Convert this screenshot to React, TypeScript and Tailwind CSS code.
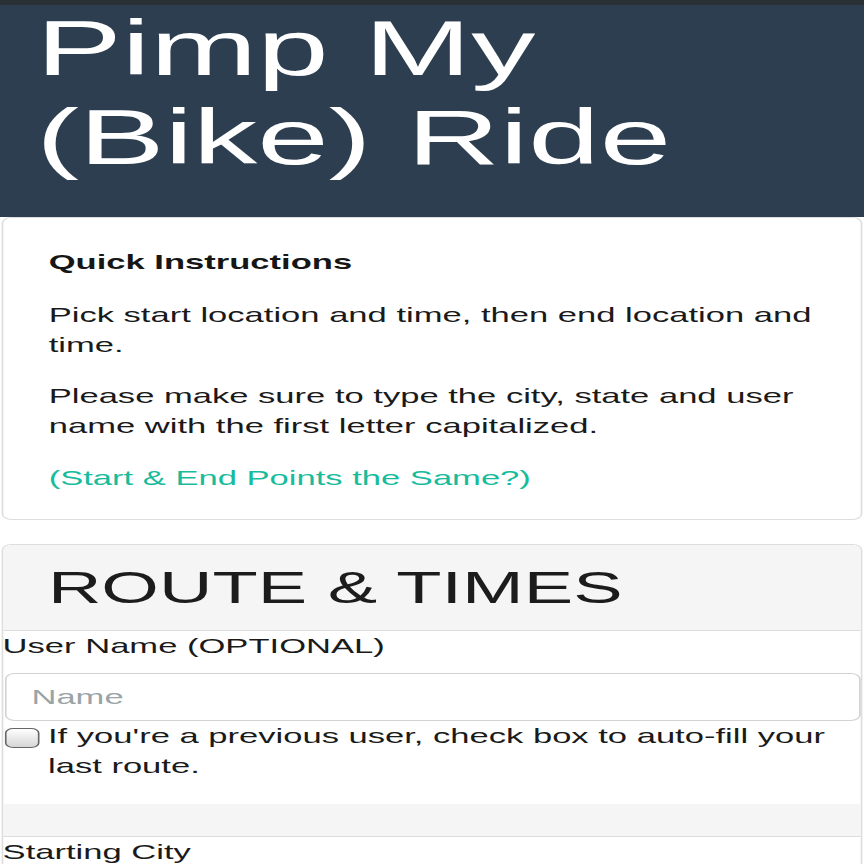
import React from "react";

export default function App() {
  return (
    <div className="w-[864px] h-[864px] overflow-hidden bg-white">
      <div className="w-[525px] origin-top-left scale-x-[1.6457] font-['Liberation_Sans',Arial,Helvetica,sans-serif] text-[#1a1a1a]">
        <header className="h-[217px] border-t-[5px] border-[#2b2f36] bg-[#2c3e50]">
          <h1 className="-mt-[1px] pl-[22px] text-[78px] leading-[89px] font-normal text-white">
            Pimp My
            <br />
            (Bike) Ride
          </h1>
        </header>

        <section className="mx-[0.6px] rounded-[6px] border border-[#dddddd] bg-white pl-[28px] pr-[20px] pt-[29px] pb-[26px]">
          <h4 className="mb-[23px] text-[21px] leading-[30px] font-bold text-[#161616]">
            Quick Instructions
          </h4>
          <p className="mb-[21px] text-[21px] leading-[30px]">
            Pick start location and time, then end location and time.
          </p>
          <p className="mb-[22px] text-[21px] leading-[30px]">
            Please make sure to type the city, state and user name with the first letter capitalized.
          </p>
          <a className="block text-[21px] leading-[30px] text-[#18bc9c]">
            (Start &amp; End Points the Same?)
          </a>
        </section>

        <section className="mx-[0.6px] mt-[24px] rounded-[6px] border border-[#dddddd] bg-white">
          <div className="rounded-t-[6px] border-b border-[#dddddd] bg-[#f5f5f5] pl-[27.5px] pt-[18px] pb-[17px]">
            <h2 className="text-[45px] leading-[50px] font-normal text-[#1c1c1c]">
              ROUTE &amp; TIMES
            </h2>
          </div>

          <label className="block text-[21px] leading-[30px]">User Name (OPTIONAL)</label>
          <input
            type="text"
            placeholder="Name"
            className="mx-[1.5px] mt-[12px] block h-[48px] w-[520px] rounded-[6px] border border-[#d2d2d2] bg-white pl-[15px] text-[21px] outline-none placeholder:text-[#9aa4a7]"
          />

          <div className="flex items-start">
            <input
              type="checkbox"
              className="ml-[1.5px] mt-[7px] h-[20px] w-[20.7px] shrink-0 appearance-none rounded-[5px] border border-[#666666] bg-gradient-to-b from-[#fefefe] to-[#d6d6d6]"
            />
            <span className="ml-[5.4px] text-[21px] leading-[30px]">
              If you're a previous user, check box to auto-fill your last route.
            </span>
          </div>

          <div className="mt-[23px] h-[33px] border-b border-[#dddddd] bg-[#f5f5f5]" />

          <label className="block text-[21px] leading-[30px]">Starting City</label>
          <input
            type="text"
            placeholder="City"
            className="mx-[1.5px] mt-[12px] block h-[48px] w-[520px] rounded-[6px] border border-[#d2d2d2] bg-white pl-[15px] text-[21px] outline-none placeholder:text-[#9aa4a7]"
          />
        </section>
      </div>
    </div>
  );
}
